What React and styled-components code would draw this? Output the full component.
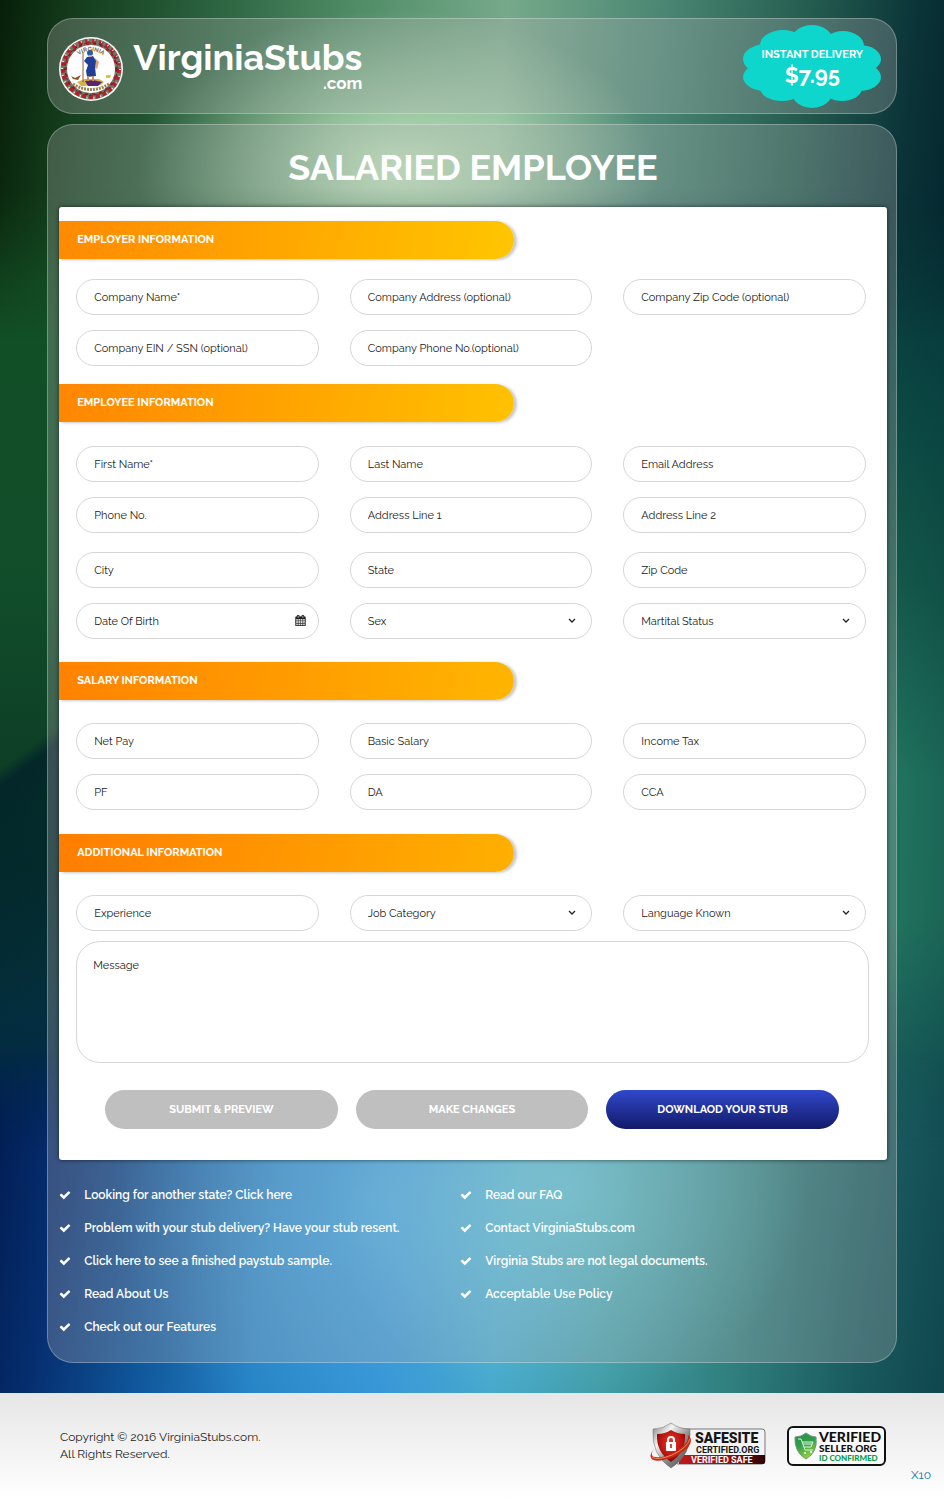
import { useId } from 'react';
import styled, { createGlobalStyle } from 'styled-components';

const GlobalStyle = createGlobalStyle`
  *, *::before, *::after {
    box-sizing: border-box;
  }

  body {
    margin: 0;
    background: #fff;
    color: #222;
    font-family: Raleway, Lato, "Open Sans", sans-serif;
    font-size: 11px;
  }

  input, select, textarea, button {
    font: inherit;
    color: inherit;
  }
`;

const Page = styled.div`
  display: flex;
  flex-direction: column;
  min-height: 100vh;
`;

/* The side colours come from the two stacked gradients, the bright glows
   at the top and bottom are faded in with masks. */
const Stage = styled.div`
  position: relative;
  isolation: isolate;
  padding: 18px 5% 30px;
  background:
    linear-gradient(143deg, transparent 0 44%, rgba(3, 38, 42, 0.95) 45%, rgba(3, 38, 48, 0) 66%) left / 50% 100% no-repeat,
    linear-gradient(#061f09 0%, #0e3b12 8%, #125026 20%, #114d2a 42%, #0d3d26 56%, #04302f 62%, #043246 72%, #012055 84%, #022a68 100%) left / 50% 100% no-repeat,
    linear-gradient(90deg, transparent 80%, rgba(2, 40, 48, 0.3)) right / 50% 100% no-repeat,
    linear-gradient(#05262e 0%, #07363a 14%, #0c4c46 28%, #17614f 42%, #268168 56%, #268066 66%, #1b6560 76%, #17565b 86%, #104850 100%) right / 50% 100% no-repeat;

  &::before,
  &::after {
    content: '';
    position: absolute;
    left: 0;
    right: 0;
    z-index: -1;
  }

  &::before {
    top: 0;
    height: 340px;
    background:
      radial-gradient(ellipse 260px 160px at 42% 50%, rgba(206, 240, 200, 0.85), transparent),
      linear-gradient(96deg, #071f08 0%, #164120 9%, #2c6340 22%, #4f8c66 36%, #76a98a 52%, #4a8673 68%, #265f51 82%, #0a3338 94%, #05262e 100%);
    mask-image: linear-gradient(#000 55%, transparent);
  }

  &::after {
    bottom: 0;
    height: 340px;
    background:
      radial-gradient(ellipse 240px 220px at 60% 40%, rgba(120, 220, 228, 0.55), transparent),
      radial-gradient(ellipse 260px 260px at 40% 45%, rgba(80, 190, 250, 0.5), transparent),
      linear-gradient(98deg, #011c52 0%, #062f70 8%, #0f5599 18%, #2480c2 30%, #3490d0 43%, #46a6c8 54%, #409ba6 65%, #31807f 78%, #195a5e 91%, #10464e 100%);
    mask-image: linear-gradient(transparent, #000 28%);
  }
`;

const Glass = styled.div`
  border: 1px solid rgba(255, 255, 255, 0.28);
  border-radius: 26px;
  background: rgba(184, 180, 182, 0.29);
`;

const Header = styled(Glass).attrs({ as: 'header' })`
  display: flex;
  align-items: center;
  justify-content: space-between;
  min-height: 96px;
  padding: 5px 14px 5px 11px;
  margin-bottom: 10px;
`;

const Brand = styled.a`
  display: flex;
  align-items: flex-start;
  gap: 10px;
  padding-top: 6px;
  color: #fff;
  text-decoration: none;
`;

const BrandText = styled.span`
  display: flex;
  flex-direction: column;
  align-items: flex-end;
  font-weight: 700;
`;

const BrandName = styled.span`
  font-size: 36px;
  line-height: 40px;
`;

const BrandSuffix = styled.span`
  font-size: 17px;
  line-height: 12px;
`;

const PriceBadge = styled.div`
  position: relative;
  isolation: isolate;
  display: flex;
  flex-direction: column;
  align-items: center;
  justify-content: center;
  width: 139px;
  height: 83px;
  color: #fff;
  font-weight: 700;
`;

const Cloud = styled.svg`
  position: absolute;
  inset: 0;
  z-index: -1;
  fill: #0fd6cc;
`;

const PriceCaption = styled.span`
  font-size: 11px;
  line-height: 18px;
  white-space: nowrap;
`;

const Price = styled.span`
  font-size: 22px;
  line-height: 22px;
`;

const Panel = styled(Glass).attrs({ as: 'main' })`
  padding: 0 9px 19px 11px;
`;

const Title = styled.h1`
  margin: 0;
  padding: 20px 0 18px;
  color: #fff;
  font-size: 36px;
  line-height: 44px;
  font-weight: 700;
  text-align: center;
`;

const Form = styled.form`
  padding: 14px 0 31px;
  border-radius: 3px;
  background: #fff;
  box-shadow: 0 0 4px rgba(0, 0, 0, 0.6);
`;

const Band = styled.h2`
  width: 55%;
  margin: 0;
  padding: 0 18px;
  border-radius: 0 19px 19px 0;
  background: linear-gradient(100deg, ${({ $from }) => $from}, ${({ $to }) => $to});
  box-shadow: 3px 1px 3px rgba(0, 0, 0, 0.22);
  color: #fff;
  font-size: 11px;
  line-height: 38px;
  font-weight: 700;
`;

const FieldGroups = styled.div`
  display: flex;
  flex-direction: column;
  gap: 19px;
  padding: ${({ $top }) => $top}px 21px ${({ $bottom }) => $bottom}px 17px;
`;

const FieldGrid = styled.div`
  display: grid;
  grid-template-columns: repeat(3, 1fr);
  gap: 15px 31px;
`;

const FieldBox = styled.div`
  position: relative;
  display: flex;
`;

const TextInput = styled.input`
  width: 100%;
  height: 36px;
  padding: 0 17px;
  border: 1px solid #d6d6d6;
  border-radius: 18px;
  background: #fff;

  &::placeholder {
    color: #222;
    opacity: 1;
  }
`;

const Select = styled(TextInput).attrs({ as: 'select' })`
  appearance: none;
`;

const FieldIcon = styled.svg`
  position: absolute;
  top: 12px;
  right: ${({ $right }) => $right}px;
  width: 11px;
  height: 11px;
  pointer-events: none;
`;

const MessageRow = styled.div`
  display: flex;
  padding: 0 18px 27px 17px;
`;

const Message = styled.textarea`
  flex: 1;
  height: 122px;
  padding: 16px;
  border: 1px solid #d6d6d6;
  border-radius: 24px;
  line-height: 16px;
  resize: none;

  &::placeholder {
    color: #222;
    opacity: 1;
  }
`;

const Actions = styled.div`
  display: grid;
  grid-template-columns: repeat(3, 1fr);
  gap: 18px;
  padding: 0 48px 0 46px;
`;

const ActionButton = styled.button`
  height: 39px;
  border: 0;
  border-radius: 20px;
  background: ${({ $primary }) => ($primary ? 'linear-gradient(#3048cc, #121a68)' : '#bfbfbf')};
  color: #fff;
  font-size: 11px;
  font-weight: 700;
  cursor: pointer;
`;

const Links = styled.div`
  display: grid;
  grid-template-columns: 401px 1fr;
  padding-top: 18px;
`;

const LinkList = styled.ul`
  margin: 0;
  padding: 0;
  list-style: none;
`;

const LinkItem = styled.li`
  display: flex;
  align-items: center;
  gap: 13px;
  min-height: 33px;
  color: #fff;
  font-size: 12px;
  font-weight: 600;

  a {
    color: inherit;
    text-decoration: none;
  }
`;

const Footer = styled.footer`
  flex: 1;
  padding: 29px 13px 18px 60px;
  background: linear-gradient(#e6e6e6, #fff);
`;

const FooterRow = styled.div`
  display: flex;
  align-items: center;
  justify-content: space-between;
  padding-right: 44px;
`;

const Copyright = styled.p`
  margin: 0;
  font-size: 12px;
  line-height: 17px;
`;

const Seals = styled.div`
  display: flex;
  align-items: center;
  gap: 20px;
`;

const Credit = styled.a`
  display: block;
  color: #1272a8;
  font-size: 12px;
  line-height: 10px;
  text-align: right;
  text-decoration: none;
`;

const CHECK_PATH =
  'M1671 566q0 40-28 68l-724 724-136 136q-28 28-68 28t-68-28l-136-136-362-362q-28-28-28-68t28-68l136-136q28-28 68-28t68 28l294 295 656-657q28-28 68-28t68 28l136 136q28 28 28 68z';

const CALENDAR_PATH =
  'M192 1664h288v-288h-288v288zm352 0h320v-288h-320v288zm-352-352h288v-320h-288v320zm352 0h320v-320h-320v320zm-352-384h288v-288h-288v288zm736 736h320v-288h-320v288zm-384-736h320v-288h-320v288zm768 736h288v-288h-288v288zm-384-352h320v-320h-320v320zm-352-864v-288q0-13-9.5-22.5t-22.5-9.5h-64q-13 0-22.5 9.5t-9.5 22.5v288q0 13 9.5 22.5t22.5 9.5h64q13 0 22.5-9.5t9.5-22.5zm736 864h288v-320h-288v320zm-384-384h320v-288h-320v288zm384 0h288v-288h-288v288zm32-480v-288q0-13-9.5-22.5t-22.5-9.5h-64q-13 0-22.5 9.5t-9.5 22.5v288q0 13 9.5 22.5t22.5 9.5h64q13 0 22.5-9.5t9.5-22.5zm384-64v1280q0 52-38 90t-90 38h-1408q-52 0-90-38t-38-90v-1280q0-52 38-90t90-38h128v-96q0-66 47-113t113-47h64q66 0 113 47t47 113v96h384v-96q0-66 47-113t113-47h64q66 0 113 47t47 113v96h128q52 0 90 38t38 90z';

const SECTIONS = [
  {
    title: 'EMPLOYER INFORMATION',
    from: '#ff8a00',
    to: '#ffc600',
    top: 20,
    bottom: 18,
    groups: [
      [
        { label: 'Company Name*' },
        { label: 'Company Address (optional)' },
        { label: 'Company Zip Code (optional)' },
        { label: 'Company EIN / SSN (optional)' },
        { label: 'Company Phone No.(optional)' },
      ],
    ],
  },
  {
    title: 'EMPLOYEE INFORMATION',
    from: '#ff8600',
    to: '#ffc200',
    top: 24,
    bottom: 23,
    groups: [
      [
        { label: 'First Name*' },
        { label: 'Last Name' },
        { label: 'Email Address' },
        { label: 'Phone No.' },
        { label: 'Address Line 1' },
        { label: 'Address Line 2' },
      ],
      [
        { label: 'City' },
        { label: 'State' },
        { label: 'Zip Code' },
        { label: 'Date Of Birth', type: 'date' },
        { label: 'Sex', type: 'select' },
        { label: 'Martital Status', type: 'select' },
      ],
    ],
  },
  {
    title: 'SALARY INFORMATION',
    from: '#ff8200',
    to: '#ffb600',
    top: 23,
    bottom: 24,
    groups: [
      [
        { label: 'Net Pay' },
        { label: 'Basic Salary' },
        { label: 'Income Tax' },
        { label: 'PF' },
        { label: 'DA' },
        { label: 'CCA' },
      ],
    ],
  },
  {
    title: 'ADDITIONAL INFORMATION',
    from: '#ff7e00',
    to: '#ffb000',
    top: 23,
    bottom: 10,
    groups: [
      [
        { label: 'Experience' },
        { label: 'Job Category', type: 'select' },
        { label: 'Language Known', type: 'select' },
      ],
    ],
  },
];

const LINKS = [
  [
    'Looking for another state? Click here',
    'Problem with your stub delivery? Have your stub resent.',
    'Click here to see a finished paystub sample.',
    'Read About Us',
    'Check out our Features',
  ],
  ['Read our FAQ', 'Contact VirginiaStubs.com', 'Virginia Stubs are not legal documents.', 'Acceptable Use Policy'],
];

function StateSeal() {
  return (
    <svg width="64" height="64" viewBox="0 0 64 64" aria-hidden="true">
      <circle cx="32" cy="32" r="32" fill="#fff" />
      <circle cx="32" cy="32" r="27" fill="none" stroke="#6f7a66" strokeWidth="7" />
      <circle cx="32" cy="32" r="28" fill="none" stroke="#b3202c" strokeWidth="4" strokeDasharray="4 3" />
      <circle cx="32" cy="32" r="25" fill="none" stroke="#a3222c" strokeWidth="3" strokeDasharray="3 4" />
      <circle cx="32" cy="32" r="29" fill="none" stroke="#efe4e0" strokeWidth="2" strokeDasharray="1 6" />
      <circle cx="32" cy="32" r="26" fill="none" stroke="#2d2a2a" strokeWidth="1" strokeDasharray="2 3" />
      <circle cx="32" cy="32" r="24" fill="#fff" />
      <path id="seal-top" d="M14 27a19 19 0 0 1 36 0" fill="none" />
      <text fontSize="6" fontWeight="700" fill="#8a6a30" textAnchor="middle">
        <textPath href="#seal-top" startOffset="50%">VIRGINIA</textPath>
      </text>
      <path d="M14 47q18 11 36 0" fill="none" stroke="#9b8350" strokeWidth="3" strokeDasharray="2 1" />
      <path d="M18 45l8-3 14 0 5 3-3 3-20 1z" fill="#d3b24a" />
      <path d="M26 44l8-1 9 2-4 4-10 0z" fill="#5b2470" />
      <path d="M12 39l4 2 6-3-3 5-5-1z" fill="#8a4f22" />
      <path d="M47 38h5l-1 3h-4z" fill="#e2c23c" />
      <path d="M24 15v30" stroke="#8c5a3a" strokeWidth="1" />
      <path d="M36 21l4 4-2 7-2-1z" fill="#d8a47c" />
      <path d="M28 20l6-1 3 5-1 6 1 9-9 1-1-6 2-6-4-4z" fill="#213f97" />
      <circle cx="31" cy="16" r="3" fill="#2a5ca8" />
      <path d="M30 18h3v2h-3z" fill="#d8a47c" />
      <path d="M29 39v5M34 39v5" stroke="#c98f66" strokeWidth="2" />
    </svg>
  );
}

function BadgeCloud() {
  return (
    <Cloud width="139" height="83" viewBox="0 0 139 83" aria-hidden="true">
      <ellipse cx="69" cy="41" rx="58" ry="30" />
      <ellipse cx="69" cy="16" rx="21" ry="16" />
      <ellipse cx="40" cy="20" rx="23" ry="15" />
      <ellipse cx="100" cy="21" rx="21" ry="15" />
      <ellipse cx="23" cy="34" rx="23" ry="15" />
      <ellipse cx="23" cy="52" rx="23" ry="14" />
      <ellipse cx="116" cy="34" rx="22" ry="14" />
      <ellipse cx="116" cy="52" rx="22" ry="14" />
      <ellipse cx="39" cy="63" rx="22" ry="13" />
      <ellipse cx="99" cy="63" rx="20" ry="13" />
      <ellipse cx="69" cy="68" rx="20" ry="15" />
    </Cloud>
  );
}

function SafeSiteSeal() {
  return (
    <svg width="118" height="48" viewBox="0 0 118 48" role="img" aria-label="SafeSite certified">
      <defs>
        <linearGradient id="steel" x1="0" y1="0" x2="1" y2="1">
          <stop offset="0" stopColor="#777" />
          <stop offset="0.3" stopColor="#f4f4f4" />
          <stop offset="0.6" stopColor="#8a8a8a" />
          <stop offset="1" stopColor="#444" />
        </linearGradient>
        <radialGradient id="ruby" cx="0.5" cy="0.4" r="0.7">
          <stop offset="0" stopColor="#ee3a30" />
          <stop offset="0.6" stopColor="#b5120f" />
          <stop offset="1" stopColor="#5c0505" />
        </radialGradient>
        <linearGradient id="ribbon" x1="0" x2="1">
          <stop offset="0" stopColor="#c2161a" />
          <stop offset="0.6" stopColor="#8c1013" />
          <stop offset="1" stopColor="#2a0506" />
        </linearGradient>
      </defs>
      <rect x="26" y="7" width="90" height="35" rx="3" fill="#f3f3f3" stroke="#777" />
      <path d="M30 33h86v7q0 2-2 2H30z" fill="url(#ribbon)" />
      <path d="M22 1q8 6 19 6 2 26-19 39Q2 33 4 7q10 0 18-6z" fill="url(#steel)" stroke="#666" strokeWidth="0.5" />
      <path d="M22 8q6 4 14 4 1 18-14 28Q7 30 8 12q8 0 14-4z" fill="url(#ruby)" />
      <path d="M5 27q-5 6-3 9 4 6 22-1 18-8 18-17 0-3-3-5 1 6-5 11-10 9-22 11-8 1-9-2-1-2 2-6z" fill="#c62a17" />
      <path d="M3 35q5 4 20-2 15-7 18-16" fill="none" stroke="#f0874f" strokeWidth="1" />
      <path d="M19 21v-3a3 3 0 0 1 6 0v3" fill="none" stroke="#fff" strokeWidth="2" />
      <rect x="17" y="20" width="10" height="9" rx="1" fill="#fff" />
      <path d="M22 22v4" stroke="#b5120f" strokeWidth="1.5" />
      <g fontFamily="Roboto, sans-serif" fontWeight="700" fill="#161616">
        <text x="46" y="21" fontSize="14" fontWeight="900">SAFESITE</text>
        <text x="47" y="31" fontSize="9">CERTIFIED.ORG</text>
        <text x="42" y="41" fontSize="9" fill="#fff">VERIFIED SAFE</text>
      </g>
    </svg>
  );
}

function VerifiedSellerSeal() {
  return (
    <svg width="100" height="42" viewBox="0 0 100 42" role="img" aria-label="Verified seller">
      <defs>
        <linearGradient id="leaf" x1="0" y1="0" x2="0.4" y2="1">
          <stop offset="0" stopColor="#2c8f45" />
          <stop offset="0.5" stopColor="#2d9e4a" />
          <stop offset="1" stopColor="#8ed03c" />
        </linearGradient>
      </defs>
      <rect x="1" y="2" width="97" height="38" rx="5" fill="#fafafa" stroke="#111" strokeWidth="2" />
      <path d="M19 8q5 4 10 4 2 15-10 22Q7 27 8 12q6 0 11-4z" fill="url(#leaf)" stroke="#7b9384" />
      <path d="M11 14h3l4 11h8M15 17h11l-2 5h-7M16 19h9" fill="none" stroke="#dff3e2" strokeWidth="1" />
      <circle cx="18" cy="28" r="1" fill="#fff" />
      <circle cx="24" cy="27" r="1" fill="#fff" />
      <g fontFamily="Lato, sans-serif" fontWeight="900" fill="#111">
        <text x="32" y="17" fontSize="14">VERIFIED</text>
        <text x="32" y="27" fontSize="10">SELLER.ORG</text>
        <text x="32" y="36" fontSize="8" fill="#0d9a4b">ID CONFIRMED</text>
      </g>
    </svg>
  );
}

function Field({ label, type }) {
  const id = useId();

  if (type === 'select') {
    return (
      <FieldBox>
        <Select id={id} aria-label={label} defaultValue="">
          <option value="">{label}</option>
        </Select>
        <FieldIcon $right={15} viewBox="0 0 11 11" aria-hidden="true">
          <path d="M3 4l3 3 3-3" fill="none" stroke="#222" strokeWidth="1.3" />
        </FieldIcon>
      </FieldBox>
    );
  }

  return (
    <FieldBox>
      <TextInput id={id} type="text" aria-label={label} placeholder={label} />
      {type === 'date' && (
        <FieldIcon $right={13} viewBox="0 0 1792 1792" fill="#222" stroke="#222" strokeWidth="40" aria-hidden="true">
          <path d={CALENDAR_PATH} />
        </FieldIcon>
      )}
    </FieldBox>
  );
}

export default function App() {
  return (
    <Page>
      <GlobalStyle />
      <Stage>
        <Header>
          <Brand href="#home">
            <StateSeal />
            <BrandText>
              <BrandName>VirginiaStubs</BrandName>
              <BrandSuffix>.com</BrandSuffix>
            </BrandText>
          </Brand>
          <PriceBadge>
            <BadgeCloud />
            <PriceCaption>INSTANT DELIVERY</PriceCaption>
            <Price>$7.95</Price>
          </PriceBadge>
        </Header>

        <Panel>
          <Title>SALARIED EMPLOYEE</Title>
          <Form onSubmit={(e) => e.preventDefault()}>
            {SECTIONS.map((section) => (
              <section key={section.title}>
                <Band $from={section.from} $to={section.to}>{section.title}</Band>
                <FieldGroups $top={section.top} $bottom={section.bottom}>
                  {section.groups.map((fields) => (
                    <FieldGrid key={fields[0].label}>
                      {fields.map((field) => (
                        <Field key={field.label} {...field} />
                      ))}
                    </FieldGrid>
                  ))}
                </FieldGroups>
              </section>
            ))}
            <MessageRow>
              <Message aria-label="Message" placeholder="Message" />
            </MessageRow>
            <Actions>
              <ActionButton type="submit">SUBMIT &amp; PREVIEW</ActionButton>
              <ActionButton type="button">MAKE CHANGES</ActionButton>
              <ActionButton type="button" $primary>DOWNLAOD YOUR STUB</ActionButton>
            </Actions>
          </Form>

          <Links>
            {LINKS.map((column) => (
              <LinkList key={column[0]}>
                {column.map((text) => (
                  <LinkItem key={text}>
                    <svg width="12" height="12" viewBox="0 0 1792 1792" fill="#fff" aria-hidden="true">
                      <path d={CHECK_PATH} />
                    </svg>
                    <a href="#info">{text}</a>
                  </LinkItem>
                ))}
              </LinkList>
            ))}
          </Links>
        </Panel>
      </Stage>

      <Footer>
        <FooterRow>
          <Copyright>
            Copyright © 2016 VirginiaStubs.com.
            <br />
            All Rights Reserved.
          </Copyright>
          <Seals>
            <SafeSiteSeal />
            <VerifiedSellerSeal />
          </Seals>
        </FooterRow>
        <Credit href="#x10">X10</Credit>
      </Footer>
    </Page>
  );
}
